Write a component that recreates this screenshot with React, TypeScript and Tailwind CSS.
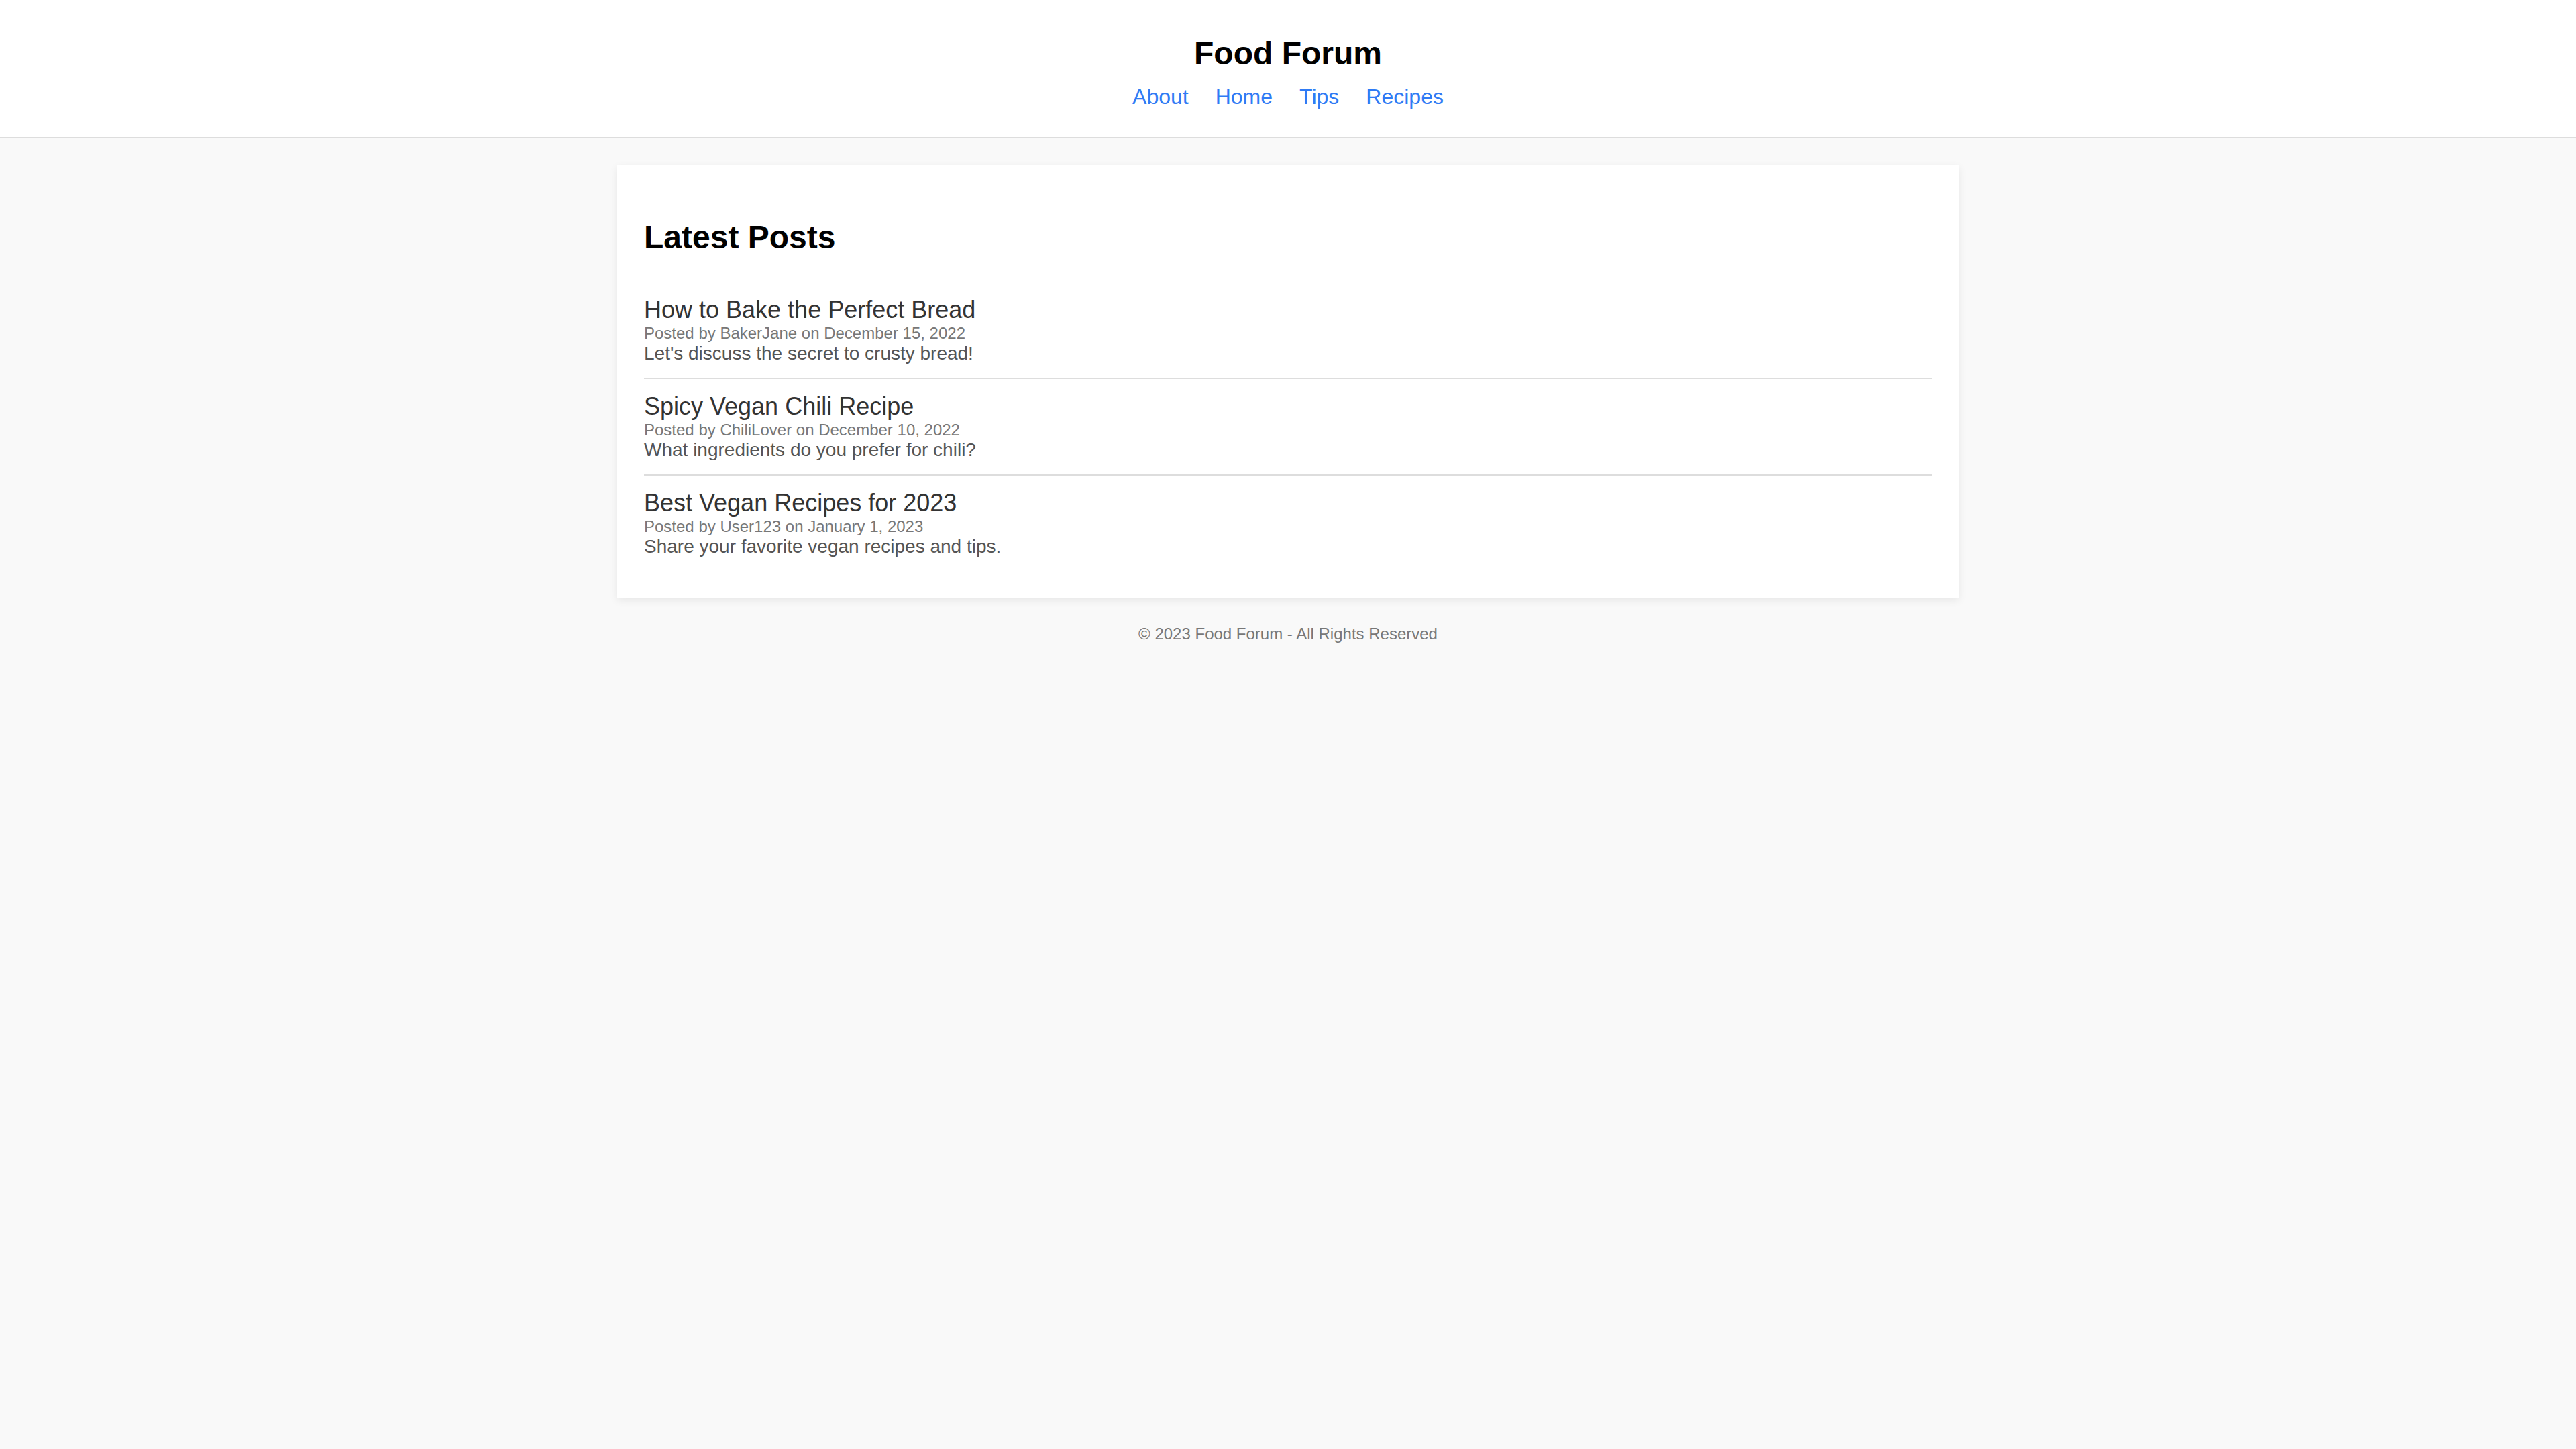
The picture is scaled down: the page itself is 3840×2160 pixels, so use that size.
const NAV_LINKS = ["About", "Home", "Tips", "Recipes"];

const POSTS = [
  {
    title: "How to Bake the Perfect Bread",
    author: "BakerJane",
    date: "December 15, 2022",
    body: "Let's discuss the secret to crusty bread!",
  },
  {
    title: "Spicy Vegan Chili Recipe",
    author: "ChiliLover",
    date: "December 10, 2022",
    body: "What ingredients do you prefer for chili?",
  },
  {
    title: "Best Vegan Recipes for 2023",
    author: "User123",
    date: "January 1, 2023",
    body: "Share your favorite vegan recipes and tips.",
  },
];

export default function App() {
  return (
    <div className="min-h-screen bg-[#f9f9f9] font-['Liberation_Sans',Arial,sans-serif]">
      {/* Header */}
      <header className="bg-white border-b-2 border-[#dddddd] pt-[56px] pb-[44px] text-center">
        <h1 className="text-[48px] leading-none font-bold text-black">Food Forum</h1>
        <nav className="mt-[24px] flex justify-center gap-[40px] text-[32px] leading-none">
          {NAV_LINKS.map((link) => (
            <a key={link} href="#" className="text-[#2f7bf5]">
              {link}
            </a>
          ))}
        </nav>
      </header>

      {/* Posts card */}
      <main className="w-[2000px] mx-auto mt-[40px] bg-white p-[40px] shadow-[0_4px_12px_rgba(0,0,0,0.08)]">
        <h2 className="mt-[40px] mb-[40px] text-[48px] leading-[55px] font-bold text-black">
          Latest Posts
        </h2>
        <div>
          {POSTS.map((post) => (
            <div
              key={post.title}
              className="py-[20px] border-b-2 border-[#dddddd] last:border-b-0"
            >
              <h3 className="text-[36px] leading-[42px] text-[#333333]">{post.title}</h3>
              <p className="text-[24px] leading-[28px] text-[#777777]">
                Posted by {post.author} on {post.date}
              </p>
              <p className="text-[28px] leading-[32px] text-[#555555]">{post.body}</p>
            </div>
          ))}
        </div>
      </main>

      {/* Footer */}
      <footer className="pt-[40px] text-center text-[24px] leading-[28px] text-[#777777]">
        © 2023 Food Forum - All Rights Reserved
      </footer>
    </div>
  );
}
